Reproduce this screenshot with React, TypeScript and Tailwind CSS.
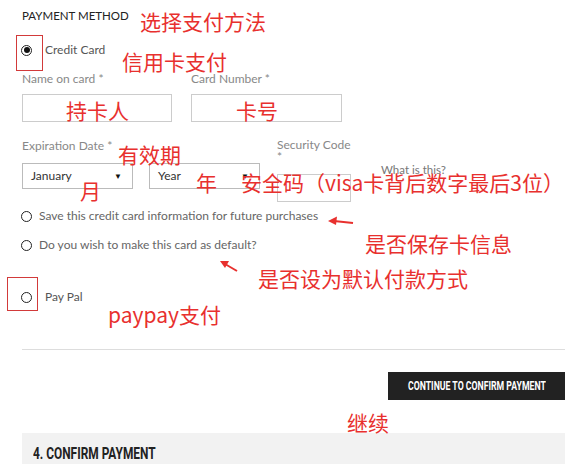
import React from "react";

const red = "text-[#e8302e]";

function Radio({ checked = false }: { checked?: boolean }) {
    return (
        <span className="flex h-[11px] w-[11px] shrink-0 items-center justify-center rounded-full border-[1.5px] border-[#222]">
            {checked && <span className="h-[6px] w-[6px] rounded-full bg-[#111]" />}
        </span>
    );
}

function Note({ text, x, y }: { text: string; x: number; y: number }) {
    return (
        <span
            className={`absolute whitespace-nowrap text-[21px] leading-[22px] ${red} font-['Noto_Sans_CJK_SC',sans-serif]`}
            style={{ left: x, top: y - 11 }}
        >
            {text}
        </span>
    );
}

function Select({ label, w }: { label: string; w: string }) {
    return (
        <div className={`flex h-[26px] ${w} items-center justify-between border border-[#bbb] pl-[8px] pr-[10px] text-[12px] text-[#333]`}>
            <span>{label}</span>
            <span className="text-[8px] text-[#111]">▼</span>
        </div>
    );
}

export default function App() {
    return (
        <div className="relative h-[464px] w-[578px] overflow-hidden bg-white font-['Lato',sans-serif]">
            <div className="h-[32px] pl-[22px] pt-[9px] text-[11.5px] leading-[14px] text-[#222]">PAYMENT METHOD</div>

            <div className="mt-[8px] flex h-[20px] items-center gap-[13px] pl-[21px]">
                <Radio checked />
                <span className="text-[12px] text-[#555]">Credit Card</span>
            </div>

            <div className="mt-[12px] flex h-[14px] gap-[19px] pl-[22px] text-[12px] leading-[14px] text-[#888]">
                <span className="w-[150px]">Name on card *</span>
                <span>Card Number *</span>
            </div>

            <div className="mt-[8px] flex h-[28px] gap-[19px] pl-[22px]">
                <div className="w-[150px] border border-[#ccc]" />
                <div className="w-[151px] border border-[#ccc]" />
            </div>

            <div className="mt-[17px] flex h-[63px] pl-[22px] text-[12px] text-[#888]">
                <div className="flex w-[127px] flex-col">
                    <span className="leading-[14px]">Expiration Date *</span>
                    <div className="mt-[10px]">
                        <Select label="January" w="w-[111px]" />
                    </div>
                </div>
                <div className="flex w-[128px] flex-col">
                    <span className="h-[14px]" />
                    <div className="mt-[10px]">
                        <Select label="Year" w="w-[111px]" />
                    </div>
                </div>
                <div className="flex w-[104px] flex-col">
                    <span className="leading-[12px]">Security Code</span>
                    <span className="leading-[12px]">*</span>
                    <div className="mt-[11px] h-[28px] w-[74px] border border-[#ccc]" />
                </div>
                <div className="pt-[25px] text-[11.5px] leading-[12px] text-[#777]">What is this?</div>
            </div>

            <div className="mt-[6px] flex h-[16px] items-center gap-[7px] pl-[21px] text-[12px] text-[#666]">
                <Radio />
                <span>Save this credit card information for future purchases</span>
            </div>
            <div className="mt-[13px] flex h-[16px] items-center gap-[7px] pl-[21px] text-[12px] text-[#666]">
                <Radio />
                <span>Do you wish to make this card as default?</span>
            </div>

            <div className="mt-[36px] flex h-[16px] items-center gap-[13px] pl-[21px]">
                <Radio />
                <span className="text-[12px] text-[#555]">Pay Pal</span>
            </div>

            <div className="ml-[22px] mr-[13px] mt-[44px] h-px bg-[#ddd]" />

            <div className="mr-[13px] mt-[22px] flex justify-end">
                <button className="flex h-[28px] w-[177px] items-center justify-center overflow-hidden bg-[#222]">
                    <span className="inline-block scale-x-[0.67] whitespace-nowrap font-['Roboto',sans-serif] text-[13px] font-bold text-white">
                        CONTINUE TO CONFIRM PAYMENT
                    </span>
                </button>
            </div>

            <div className="ml-[22px] mr-[13px] mt-[33px] h-[40px] bg-[#f2f2f2] pl-[11px] pt-[8px]">
                <span className="inline-block origin-left scale-x-[0.7] whitespace-nowrap font-['Roboto',sans-serif] text-[17px] font-bold leading-[20px] text-[#222]">
                    4. CONFIRM PAYMENT
                </span>
            </div>

            {/* annotations */}
            <div className="absolute left-[16px] top-[35px] h-[36px] w-[27px] border border-[#d23a3a]" />
            <div className="absolute left-[7px] top-[277px] h-[34px] w-[31px] border border-[#d23a3a]" />

            <Note text="选择支付方法" x={140} y={21} />
            <Note text="信用卡支付" x={122} y={61} />
            <Note text="持卡人" x={66} y={110} />
            <Note text="卡号" x={236} y={110} />
            <Note text="有效期" x={118} y={154} />
            <Note text="月" x={80} y={190} />
            <Note text="年" x={196} y={182} />
            <Note text="安全码（visa卡背后数字最后3位）" x={241} y={182} />
            <Note text="是否保存卡信息" x={365} y={243} />
            <Note text="是否设为默认付款方式" x={258} y={278} />
            <Note text="paypay支付" x={108} y={314} />
            <Note text="继续" x={347} y={422} />

            <svg className="absolute left-[326px] top-[214px]" width="30" height="14" viewBox="0 0 30 14">
                <path d="M27 9 L8 7" stroke="#e8302e" strokeWidth="2" fill="none" />
                <path d="M2 7 L11 2.5 L10 11 Z" fill="#e8302e" />
            </svg>
            <svg className="absolute left-[218px] top-[258px]" width="22" height="16" viewBox="0 0 22 16">
                <path d="M19 13 L7 6" stroke="#e8302e" strokeWidth="2" fill="none" />
                <path d="M2 3 L11 3 L7 10 Z" fill="#e8302e" />
            </svg>
        </div>
    );
}
